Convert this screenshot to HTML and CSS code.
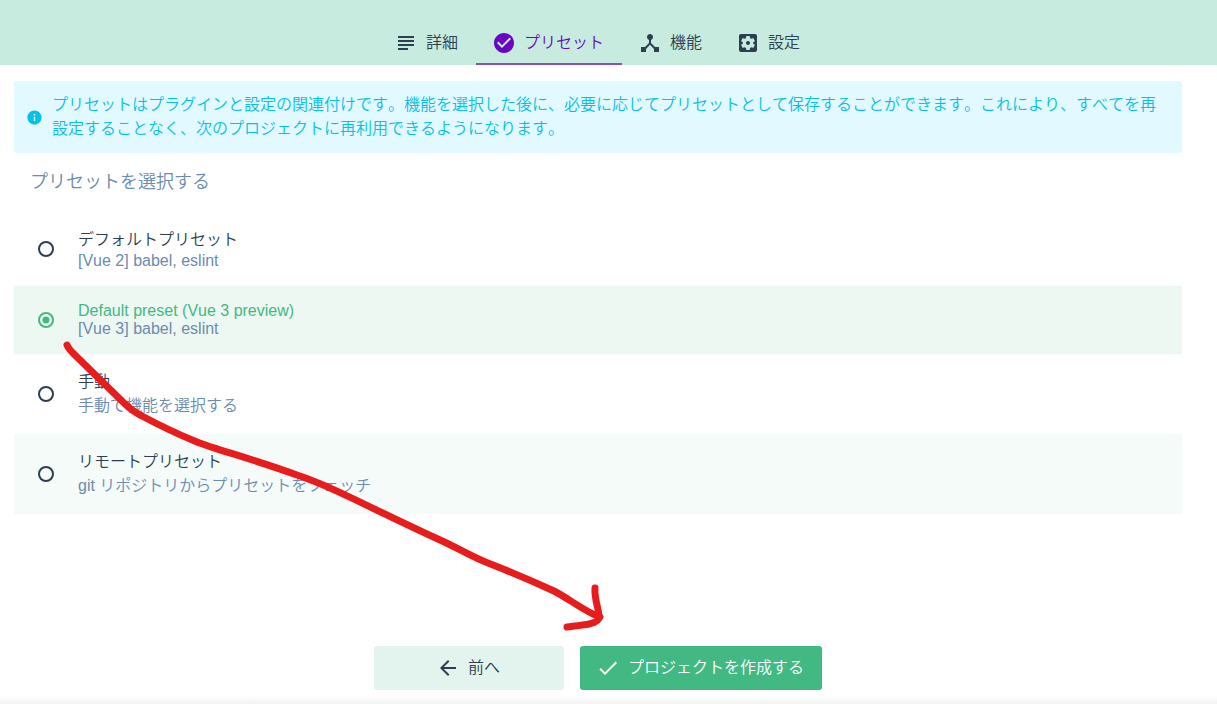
FILE: index.html
```html
<!DOCTYPE html>
<html lang="ja">
<head>
    <meta charset="UTF-8">
    <meta name="viewport" content="width=device-width, initial-scale=1.0">
    <title>プリセット</title>
    <link rel="stylesheet" href="styles.css">
</head>
<body>
    <header class="header">
        <nav class="tabs">
            <a class="tab" href="#details">
                <svg class="icon" viewBox="0 0 24 24"><path d="M4 5h16v2H4zM4 9h16v2H4zM4 13h16v2H4zM4 17h10v2H4z"/></svg>
                <span>詳細</span>
            </a>
            <a class="tab active" href="#presets">
                <svg class="icon" viewBox="0 0 24 24"><path d="M12 2C6.48 2 2 6.48 2 12s4.48 10 10 10 10-4.48 10-10S17.52 2 12 2zm-2 15l-5-5 1.41-1.41L10 14.17l7.59-7.59L19 8l-9 9z"/></svg>
                <span>プリセット</span>
            </a>
            <a class="tab" href="#features">
                <svg class="icon" viewBox="0 0 24 24"><path d="M17 16l-4-4V8.82C14.16 8.4 15 7.3 15 6c0-1.66-1.34-3-3-3S9 4.34 9 6c0 1.3.84 2.4 2 2.82V12l-4 4H3v5h5v-3.05l4-4.2 4 4.2V21h5v-5h-4z"/></svg>
                <span>機能</span>
            </a>
            <a class="tab" href="#config">
                <svg class="icon" viewBox="0 0 24 24"><path d="M12 10c-1.100 0-2 .9-2 2s.9 2 2 2 2-.9 2-2-.9-2-2-2zm7-7H5c-1.110 0-2 .9-2 2v14c0 1.100.89 2 2 2h14c1.110 0 2-.9 2-2V5c0-1.100-.89-2-2-2zm-1.750 9c0 .23-.02.46-.05.68l1.480 1.160c.13.11.17.3.08.45l-1.400 2.420c-.09.15-.27.21-.43.15l-1.740-.7c-.36.28-.76.51-1.180.69l-.26 1.850c-.03.17-.18.3-.35.3h-2.800c-.17 0-.32-.13-.35-.29l-.26-1.850c-.43-.18-.82-.41-1.180-.69l-1.740.7c-.16.06-.34 0-.43-.15l-1.400-2.420c-.09-.15-.05-.34.08-.45l1.480-1.160c-.03-.23-.05-.46-.05-.69 0-.23.02-.46.05-.68l-1.480-1.160c-.13-.11-.17-.3-.08-.45l1.400-2.420c.09-.15.27-.21.43-.15l1.740.7c.36-.28.76-.51 1.180-.69l.26-1.850c.03-.17.18-.3.35-.3h2.800c.17 0 .32.13.35.29l.26 1.850c.43.18.82.41 1.180.69l1.740-.7c.16-.06.34 0 .43.15l1.400 2.420c.09.15.05.34-.08.45l-1.480 1.160c.03.23.05.46.05.69z"/></svg>
                <span>設定</span>
            </a>
        </nav>
    </header>

    <main class="content">
        <div class="info">
            <svg class="info-icon" viewBox="0 0 24 24"><path d="M12 2C6.48 2 2 6.48 2 12s4.48 10 10 10 10-4.48 10-10S17.520 2 12 2zm1 15h-2v-6h2v6zm0-8h-2V7h2v2z"/></svg>
            <p class="info-text">プリセットはプラグインと設定の関連付けです。機能を選択した後に、必要に応じてプリセットとして保存することができます。これにより、すべてを再設定することなく、次のプロジェクトに再利用できるようになります。</p>
        </div>

        <h1 class="title">プリセットを選択する</h1>

        <label class="preset">
            <input class="radio" type="radio" name="preset">
            <span class="preset-text">
                <span class="name">デフォルトプリセット</span>
                <span class="description latin">[Vue 2] babel, eslint</span>
            </span>
        </label>
        <label class="preset selected">
            <input class="radio" type="radio" name="preset" checked>
            <span class="preset-text">
                <span class="name latin">Default preset (Vue 3 preview)</span>
                <span class="description latin">[Vue 3] babel, eslint</span>
            </span>
        </label>
        <label class="preset">
            <input class="radio" type="radio" name="preset">
            <span class="preset-text">
                <span class="name">手動</span>
                <span class="description">手動で機能を選択する</span>
            </span>
        </label>
        <label class="preset hover">
            <input class="radio" type="radio" name="preset">
            <span class="preset-text">
                <span class="name">リモートプリセット</span>
                <span class="description">git リポジトリからプリセットをフェッチ</span>
            </span>
        </label>
    </main>

    <footer class="actions">
        <button class="button previous" type="button">
            <svg class="icon" viewBox="0 0 24 24"><path d="M20 11H7.830l5.590-5.590L12 4l-8 8 8 8 1.410-1.410L7.830 13H20v-2z"/></svg>
            <span>前へ</span>
        </button>
        <button class="button create" type="button">
            <svg class="icon" viewBox="0 0 24 24"><path d="M9 16.170L4.830 12l-1.420 1.410L9 19 21 7l-1.410-1.410z"/></svg>
            <span>プロジェクトを作成する</span>
        </button>
    </footer>

    <!-- Red arrow from the selected preset to the create button -->
    <svg class="arrow" width="560" height="310" viewBox="55 335 560 310">
        <path d="M67 345C69 350 74 354 78 358L124 403Q132 411 142 416Q170 431 197 442C217 450 247 457 297 475C333 487 366 506 440 540C456 547 474 558 488 563C506 570 532 581 554 591C568 598 585 612 600 617"/>
        <path d="M595 588C594 600 600 612 599 618C598 624 583 625 567 627"/>
    </svg>
</body>
</html>
```
FILE: styles.css
```css
* {
  box-sizing: border-box;
}

body {
  display: flex;
  flex-direction: column;
  min-height: 100vh;
  margin: 0;
  background: white;
  color: #2c3e50;
  font-family: "Liberation Sans", "Noto Sans CJK JP", sans-serif;
  font-size: 16px;
  font-weight: 350;
  font-kerning: none;
  text-spacing-trim: space-all;
  line-height: 24px;
}

.icon {
  width: 24px;
  height: 24px;
  fill: currentColor;
}

/* Tabs */
.header {
  padding: 22px 21px 0 0;
  background: #c7ebdf;
}

.tabs {
  display: flex;
  justify-content: center;
}

.tab {
  display: flex;
  align-items: center;
  gap: 8px;
  height: 43px;
  padding: 0 18px 0 16px;
  border-bottom: 2px solid transparent;
  color: #2c3e50;
  text-decoration: none;
}

.tab.active {
  border-bottom-color: #864dcd;
  color: #6806c1;
}

/* Preset list */
.content {
  flex: 1;
  padding: 16px 35px 0 14px;
}

.info {
  display: flex;
  align-items: center;
  gap: 9px;
  padding: 12px 16px 12px 12px;
  border-radius: 3px;
  background: #e2f9ff;
  color: #03c2e6;
}

.info-icon {
  flex: none;
  width: 17px;
  height: 17px;
  fill: currentColor;
}

.info-text {
  margin: 0;
}

.title {
  margin: 0;
  padding: 16px 16px 17px;
  color: #6b8bb0;
  font-size: 18px;
  font-weight: 350;
  line-height: 26px;
}

.preset {
  display: flex;
  align-items: center;
  gap: 24px;
  padding: 16px 24px;
}

.preset.selected {
  background: #eef8f3;
}

.preset.hover {
  background: #f4fbf9;
}

.preset-text,
.name,
.description {
  display: block;
}

.latin {
  line-height: 18px;
}

.description {
  color: #6b8bb0;
}

.selected .name {
  color: #42b983;
}

.radio {
  appearance: none;
  flex: none;
  width: 16px;
  height: 16px;
  margin: 0;
  border: 2px solid #2c3e50;
  border-radius: 50%;
}

.radio:checked {
  border-color: #42b983;
  background: radial-gradient(circle, #42b983 3px, transparent 4px);
}

/* Bottom buttons */
.actions {
  display: flex;
  justify-content: center;
  gap: 16px;
  padding: 0 21px 14px 0;
  background: linear-gradient(to top, #f2f2f2, white 8px);
}

.button {
  display: flex;
  align-items: center;
  justify-content: center;
  gap: 8px;
  height: 44px;
  padding: 0 18px 0 16px;
  border: 0;
  border-radius: 3px;
  font: inherit;
  font-kerning: none;
}

.previous {
  min-width: 190px;
  background: #e3f4ee;
  color: #2c3e50;
}

.create {
  min-width: 242px;
  background: #42b983;
  color: white;
}

.arrow {
  position: absolute;
  left: 55px;
  top: 335px;
  fill: none;
  stroke: #e71d1d;
  stroke-width: 7px;
  stroke-linecap: round;
  stroke-linejoin: round;
  pointer-events: none;
}
```
